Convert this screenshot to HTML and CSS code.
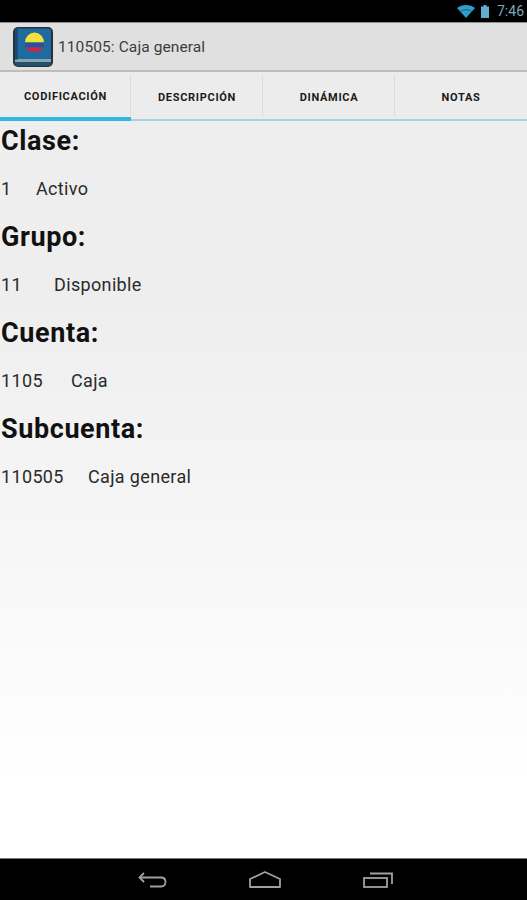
FILE: index.html
```html
<!DOCTYPE html>
<html>
<head>
    <title>110505: Caja general</title>
    <link rel="stylesheet" href="styles.css">
</head>
<body>
    <div class="statusbar">
        <svg class="wifi" width="18" height="13" viewBox="0 0 18 13">
            <path d="M0 3C2.400 1 5.500 0 9 0s6.600 1 9 3l-9 10z" fill="#2f9fc9"/>
            <path d="M3.500 6.500C5 5.300 7 4.700 9 4.700s4 .6 5.500 1.800" fill="none" stroke="#0d4d66" stroke-width=".8"/>
        </svg>
        <svg class="battery" width="8" height="13" viewBox="0 0 8 13">
            <path d="M2.500 0h3v1.500H8V13H0V1.500h2.500z" fill="#5fb0cf"/>
        </svg>
        <span class="clock">7:46</span>
    </div>

    <div class="actionbar">
        <svg class="logo" width="40" height="40" viewBox="0 0 40 40">
            <rect x="0" y="0" width="40" height="40" rx="5" fill="#26333c"/>
            <rect x="2" y="1.500" width="36" height="37" rx="3" fill="#1f6a9e"/>
            <rect x="2" y="32" width="36" height="3" fill="#88a3ad"/>
            <rect x="2" y="35" width="36" height="3.500" fill="#24506b"/>
            <rect x="2" y="1.500" width="3" height="31" fill="#174d75"/>
            <path d="M12 15.500a9.500 10 0 0 1 19 0z" fill="#f2e33c"/>
            <rect x="12" y="15.500" width="19" height="5" fill="#2c4f9e"/>
            <path d="M12.800 20.500h17.400a9.500 7 0 0 1-17.400 0z" fill="#d0273e"/>
        </svg>
        <span class="title">110505: Caja general</span>
    </div>

    <div class="tabs">
        <div class="tab active">CODIFICACIÓN</div>
        <div class="tab">DESCRIPCIÓN</div>
        <div class="tab">DINÁMICA</div>
        <div class="tab">NOTAS</div>
    </div>

    <div class="content">
        <h2>Clase:</h2>
        <div class="row"><span class="code w1">1</span><span>Activo</span></div>
        <h2>Grupo:</h2>
        <div class="row"><span class="code w2">11</span><span>Disponible</span></div>
        <h2>Cuenta:</h2>
        <div class="row"><span class="code w4">1105</span><span>Caja</span></div>
        <h2>Subcuenta:</h2>
        <div class="row"><span class="code w6">110505</span><span>Caja general</span></div>
    </div>

    <div class="navbar">
        <svg width="29" height="16" viewBox="0 0 29 16" fill="none" stroke="#a0a0a0" stroke-width="1.800">
            <path d="M6 1 1.500 5.500 6 10"/>
            <path d="M1.500 5.500H23c2.500 0 4.500 1.500 4.500 4.500s-2 4.500-4.500 4.500H12"/>
        </svg>
        <svg width="32" height="17" viewBox="0 0 32 17" fill="none" stroke="#a0a0a0" stroke-width="1.800">
            <path d="M1 8 16 1l15 7v8H1z" stroke-linejoin="round"/>
        </svg>
        <svg width="30" height="16" viewBox="0 0 30 16" fill="none" stroke="#a0a0a0" stroke-width="1.800">
            <rect x="1" y="6" width="23" height="9"/>
            <path d="M7 1.500h22V12"/>
        </svg>
    </div>
</body>
</html>
```

FILE: styles.css
```css
html, body { margin: 0; padding: 0; }
body { width: 527px; height: 900px; display: flex; flex-direction: column; overflow: hidden; font-family: Roboto, sans-serif; background: #fff; }

.statusbar { height: 22px; flex: none; background: #000; display: flex; align-items: center; justify-content: flex-end; padding-right: 3px; box-sizing: border-box; }
.wifi { margin-right: 6px; }
.battery { margin-right: 8px; }
.clock { color: #7aa9ba; font-size: 14px; }

.actionbar { height: 50px; flex: none; box-sizing: border-box; background: #e0e0e0; border-top: 1px solid #8f8f8f; border-bottom: 2px solid #bdbdbd; display: flex; align-items: center; padding-left: 13px; }
.logo { margin-right: 5px; }
.title { font-size: 15.500px; letter-spacing: .1px; color: #3c3c3c; }

.tabs { height: 49px; flex: none; display: flex; background: #ececec; }
.tab { width: 132px; box-sizing: border-box; font-size: 11px; letter-spacing: .7px; font-weight: bold; color: #1a1a1a; display: flex; align-items: center; justify-content: center; padding-top: 3px; border-bottom: 2px solid #a6d4e2; position: relative; }
.tab:not(:last-child)::after { content: ""; position: absolute; right: 0; top: 3px; bottom: 3px; width: 1px; background: #dcdcdc; }
.tab.active { border-bottom: 4px solid #33b5e5; width: 131px; }

.content { flex: 1; background: linear-gradient(#eeeeee 0, #eeeeee 180px, #ffffff 660px); padding-top: 2px; }
.content h2 { margin: 0; height: 36px; line-height: 36px; font-size: 27px; letter-spacing: .6px; font-weight: bold; color: #111; padding-left: 1px; }
.row { height: 60px; line-height: 60px; font-size: 18px; letter-spacing: .35px; color: #2a2a2a; padding-left: 1px; display: flex; }
.code { flex: none; }
.w1 { width: 35px; }
.w2 { width: 53px; }
.w4 { width: 70px; }
.w6 { width: 87px; }

.navbar { height: 42px; flex: none; background: #000; border-top: 1px solid #777; box-sizing: border-box; display: flex; align-items: center; justify-content: center; gap: 82px; padding-left: 4px; }
```
